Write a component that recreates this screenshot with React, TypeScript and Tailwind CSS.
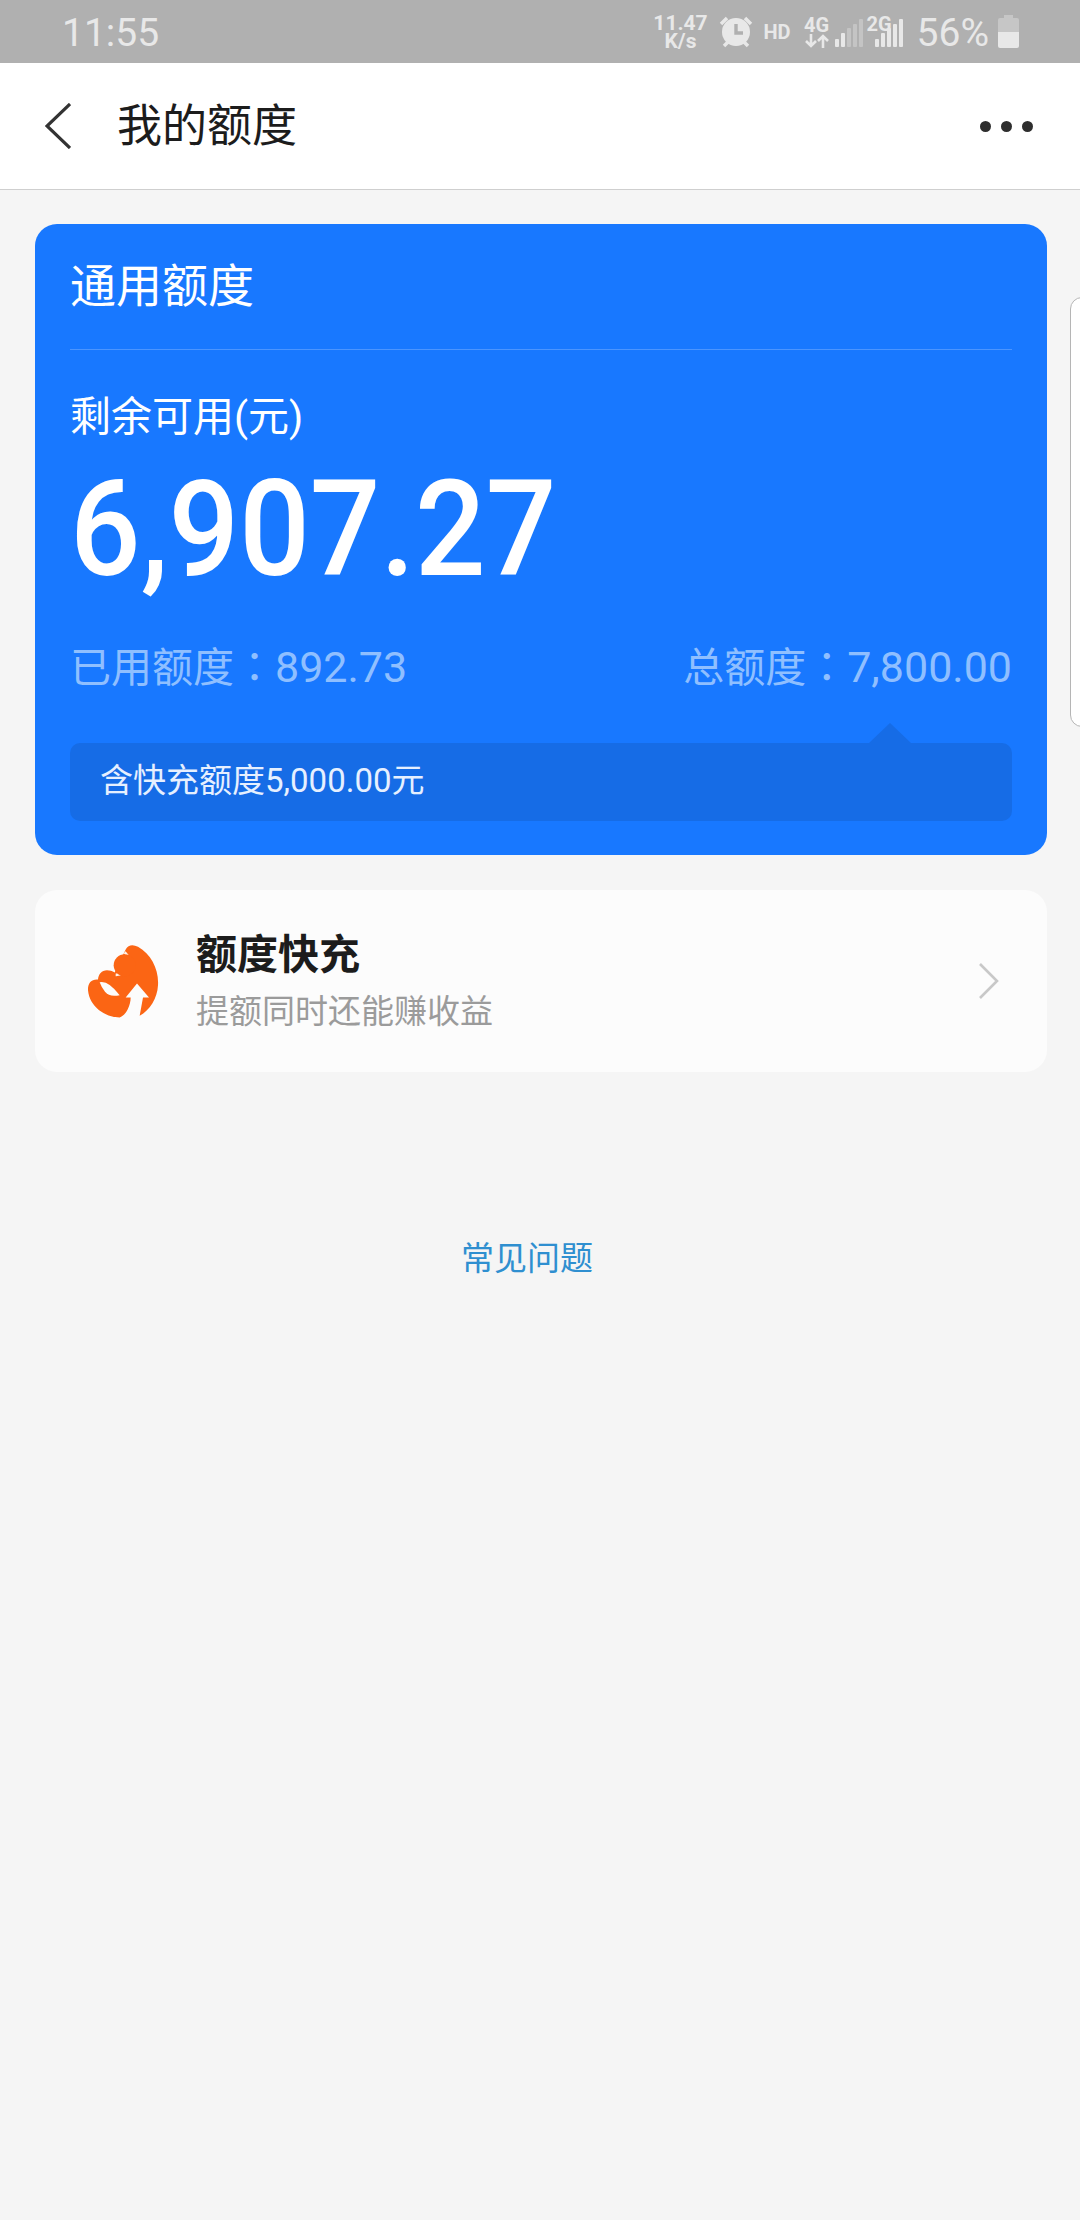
const cjk = "font-['Roboto','Noto_Sans_CJK_SC',sans-serif]";

const Signal = ({ dim }: { dim?: boolean }) => (
  <svg width="28" height="28" viewBox="0 0 28 28">
    <rect x="0" y="20" width="4" height="8" rx="1" fill="#e8e8e8" />
    <rect x="6" y="14" width="4" height="14" rx="1" fill="#e8e8e8" />
    <rect x="12" y="9" width="4" height="19" rx="1" fill={dim ? "#c4c4c4" : "#e8e8e8"} />
    <rect x="18" y="5" width="4" height="23" rx="1" fill={dim ? "#c4c4c4" : "#e8e8e8"} />
    <rect x="24" y="0" width="4" height="28" rx="1" fill={dim ? "#c4c4c4" : "#e8e8e8"} />
  </svg>
);

const StatusBar = () => (
  <div className={`flex h-[63px] items-center justify-between bg-[#b0b0b0] pl-[62px] pr-[61px] text-[#e8e8e8] ${cjk}`}>
    <span className="mt-[3px] text-[39px] leading-none">11:55</span>
    <div className="flex items-center">
      <div className="flex w-[54px] flex-col items-center text-[21px] font-bold leading-[18px]">
        <span>11.47</span>
        <span>K/s</span>
      </div>
      <svg width="34" height="33" viewBox="0 0 34 33" className="ml-[12px]">
        <circle cx="17" cy="17" r="14" fill="#e8e8e8" />
        <path d="M17 9v9h7" fill="none" stroke="#b0b0b0" strokeWidth="3.4" />
        <path d="M2 9l6-6M32 9l-6-6M5 31l4-4M29 31l-4-4" stroke="#e8e8e8" strokeWidth="3.5" />
      </svg>
      <span className="ml-[10px] text-[20px] font-bold leading-none">HD</span>
      <div className="ml-[14px] flex w-[24px] flex-col items-center">
        <span className="text-[20px] font-bold leading-[20px]">4G</span>
        <svg width="24" height="14" viewBox="0 0 24 14" className="mt-[-1px]">
          <path d="M6 0v12M1 7l5 5 5-5M18 14V2M13 7l5-5 5 5" fill="none" stroke="#e8e8e8" strokeWidth="2.6" />
        </svg>
      </div>
      <div className="ml-[6px] mt-[2px]">
        <Signal dim />
      </div>
      <div className="relative ml-[12px] mt-[2px]">
        <Signal />
        <span className="absolute left-[-8px] top-[-5px] text-[20px] font-bold leading-[20px]">2G</span>
      </div>
      <span className="ml-[14px] mt-[3px] text-[39px] leading-none">56%</span>
      <svg width="21" height="33" viewBox="0 0 21 33" className="ml-[9px]">
        <path d="M6 0h9v3h4a2 2 0 0 1 2 2v12H0V5a2 2 0 0 1 2-2h4z" fill="#c6c6c6" />
        <path d="M0 17h21v14a2 2 0 0 1-2 2H2a2 2 0 0 1-2-2z" fill="#e8e8e8" />
      </svg>
    </div>
  </div>
);

const NavBar = () => (
  <div className={`flex h-[127px] items-center border-b border-[#cfcfcf] bg-white pl-[45px] pr-[47px] ${cjk}`}>
    <svg width="26" height="46" viewBox="0 0 26 46" fill="none" stroke="#333333" strokeWidth="3.2">
      <path d="M25 1L2 23l23 22" />
    </svg>
    <span className="ml-[46px] text-[45px] leading-none text-[#1c1c1c]">我的额度</span>
    <div className="ml-auto flex gap-[10px]">
      <div className="h-[11px] w-[11px] rounded-full bg-[#2e2e2e]" />
      <div className="h-[11px] w-[11px] rounded-full bg-[#2e2e2e]" />
      <div className="h-[11px] w-[11px] rounded-full bg-[#2e2e2e]" />
    </div>
  </div>
);

const QuotaCard = () => (
  <div className={`h-[631px] w-[1012px] shrink-0 rounded-[22px] bg-[#1878ff] px-[35px] text-white ${cjk}`}>
    <div className="flex h-[126px] items-center border-b border-[#4b95ff] pb-[2px] text-[46px] leading-none">通用额度</div>
    <div className="mt-[44px] text-[41px] leading-[46px]">剩余可用(元)</div>
    <div className="mt-[29px] origin-left scale-x-[0.935] text-[133px] font-medium leading-[122px]">6,907.27</div>
    <div className="mt-[50px] flex justify-between text-[41px] leading-[46px] text-[#8fbfff]">
      <span>
        已用额度<span className="font-['Noto_Sans_CJK_TC',sans-serif]">：</span>
        <span className="text-[43px]">892.73</span>
      </span>
      <span>
        总额度<span className="font-['Noto_Sans_CJK_TC',sans-serif]">：</span>
        <span className="text-[43px]">7,800.00</span>
      </span>
    </div>
    <div className="relative mt-[52px] flex h-[78px] items-center rounded-[10px] bg-[#166ce6] pb-[3px] pl-[30px] text-[33px] leading-none text-[#e6f0ff]">
      <svg width="42" height="20" viewBox="0 0 42 20" className="absolute right-[101px] top-[-20px]">
        <path d="M0 20L21 0l21 20z" fill="#166ce6" />
      </svg>
      含快充额度5,000.00元
    </div>
  </div>
);

const TopUpLogo = () => (
  <svg width="72" height="75" viewBox="172 192 216 224">
    <path
      d="M288 208Q300 188 325 200C365 222 388 270 385 315C383 355 360 390 330 407L340 352L358 352L322 310L288 352L303 352C303 375 290 405 270 412C225 410 180 380 175 330C174 308 186 296 205 298C206 282 216 270 232 270C240 270 248 272 255 277Z"
      fill="#fb6514"
    />
    <path d="M285 216A39 39 0 0 1 258 284" fill="none" stroke="#fff3ea" strokeWidth="8" />
    <circle cx="285" cy="255" r="33" fill="#fb6514" />
    <path d="M210 306Q236 300 270 345Q240 352 226 335Q216 322 210 306Z" fill="#fcfcfc" />
  </svg>
);

const TopUpRow = () => (
  <div className={`ml-[35px] mr-[33px] mt-[35px] flex h-[182px] items-center rounded-[22px] bg-[#fcfcfc] pl-[52px] pr-[48px] ${cjk}`}>
    <TopUpLogo />
    <div className="ml-[37px] flex flex-col">
      <span className="text-[41px] font-bold leading-[48px] text-[#1c1c1c]">额度快充</span>
      <span className="mt-[13px] text-[33px] leading-[40px] text-[#9b9b9b]">提额同时还能赚收益</span>
    </div>
    <svg width="21" height="36" viewBox="0 0 21 36" fill="none" stroke="#c8c8c8" strokeWidth="2.6" className="ml-auto">
      <path d="M2 1l17 17L2 35" />
    </svg>
  </div>
);

export default function App() {
  return (
    <div className="flex min-h-[2220px] w-[1080px] flex-col overflow-hidden bg-[#f5f5f5]">
      <StatusBar />
      <NavBar />
      <div className="mt-[34px] flex items-start gap-[23px] overflow-hidden pl-[35px]">
        <QuotaCard />
        <div className="mt-[73px] h-[430px] w-[300px] shrink-0 rounded-[12px] border border-[#b5b5b5] bg-white" />
      </div>
      <TopUpRow />
      <div className={`mt-[168px] flex justify-center pr-[26px] text-[33px] leading-[38px] text-[#2f8fd0] ${cjk}`}>常见问题</div>
    </div>
  );
}
